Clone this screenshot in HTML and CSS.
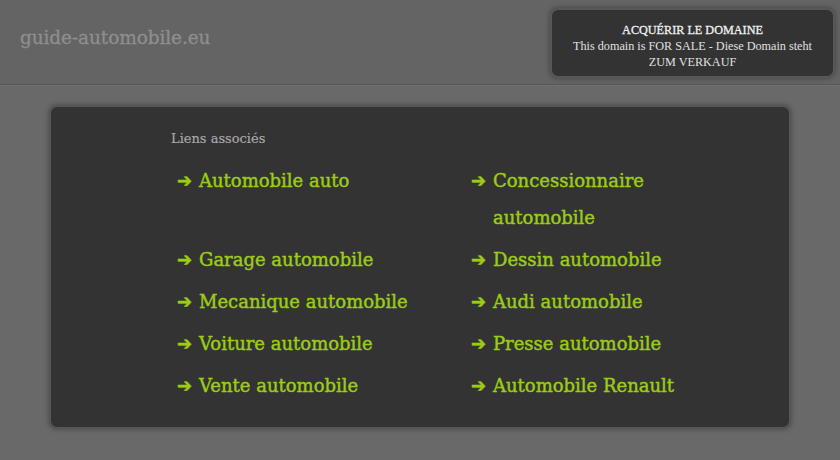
FILE: index.html
```html
<!DOCTYPE html>
<html lang="fr">
<head>
<meta charset="utf-8">
<title>guide-automobile.eu</title>
<link rel="stylesheet" href="styles.css">
</head>
<body>
<header class="header">
  <div class="site-name">guide-automobile.eu</div>
  <div class="sale">
    <div class="sale-title">ACQUÉRIR LE DOMAINE</div>
    <div class="sale-text">This domain is FOR SALE - Diese Domain steht ZUM VERKAUF</div>
  </div>
</header>
<main class="main">
  <section class="box">
    <div class="box-inner">
      <div class="heading">Liens associés</div>
      <ul class="links">
        <li><span class="arrow">➔</span><span class="label">Automobile auto</span></li>
        <li><span class="arrow">➔</span><span class="label">Concessionnaire automobile</span></li>
        <li><span class="arrow">➔</span><span class="label">Garage automobile</span></li>
        <li><span class="arrow">➔</span><span class="label">Dessin automobile</span></li>
        <li><span class="arrow">➔</span><span class="label">Mecanique automobile</span></li>
        <li><span class="arrow">➔</span><span class="label">Audi automobile</span></li>
        <li><span class="arrow">➔</span><span class="label">Voiture automobile</span></li>
        <li><span class="arrow">➔</span><span class="label">Presse automobile</span></li>
        <li><span class="arrow">➔</span><span class="label">Vente automobile</span></li>
        <li><span class="arrow">➔</span><span class="label">Automobile Renault</span></li>
      </ul>
    </div>
  </section>
</main>
</body>
</html>
```
FILE: styles.css
```css
html, body {
  margin: 0;
  padding: 0;
}
body {
  background: #696969;
  font-family: "DejaVu Serif", "Liberation Serif", serif;
  width: 840px;
  height: 460px;
  overflow: hidden;
}
.header {
  height: 84px;
  background: #646464;
  border-bottom: 1px solid #555555;
  box-shadow: 0 1px 0 #727272;
  display: flex;
  justify-content: space-between;
  align-items: flex-start;
  padding: 0 5px 0 20px;
}
.site-name {
  margin-top: 27px;
  font-size: 18.5px;
  color: #8e8e8e;
  letter-spacing: -0.1px;
  -webkit-text-stroke: 0.3px #8e8e8e;
}
.sale {
  margin-top: 8px;
  width: 285px;
  height: 70px;
  box-sizing: border-box;
  background: #333333;
  border: 2px solid #575757;
  border-radius: 8px;
  box-shadow: 0 0 4px 1px #4a4a4a;
  text-align: center;
  color: #e0e0e0;
  padding-top: 12px;
  font-family: "Liberation Serif", serif;
  font-size: 12.2px;
}
.sale-title {
  color: #f0f0f0;
  line-height: 16px;
  -webkit-text-stroke: 0.3px #f0f0f0;
}
.sale-text {
  line-height: 16px;
  padding: 0 12px;
}
.main {
  padding: 20px 0 0 49px;
}
.box {
  width: 742px;
  height: 324px;
  box-sizing: border-box;
  background: #333333;
  border: 2px solid #565656;
  border-radius: 8px;
  box-shadow: 0 0 4px 1px #505050;
}
.box-inner {
  padding: 22px 0 0 120px;
}
.heading {
  font-size: 13px;
  color: #a8a8a8;
  line-height: 20px;
  -webkit-text-stroke: 0.2px #a8a8a8;
}
.links {
  list-style: none;
  margin: 13px 0 0 6px;
  padding: 0;
  display: grid;
  grid-template-columns: 294px 220px;
  row-gap: 5px;
}
.links li {
  display: flex;
  align-items: flex-start;
  font-size: 18px;
  line-height: 37px;
  color: #9ccc14;
  -webkit-text-stroke: 0.45px #9ccc14;
}
.arrow {
  width: 22px;
  flex: none;
  font-family: "DejaVu Sans", sans-serif;
  font-size: 18px;
  font-weight: bold;
}
.label {
  flex: 1;
}
```
